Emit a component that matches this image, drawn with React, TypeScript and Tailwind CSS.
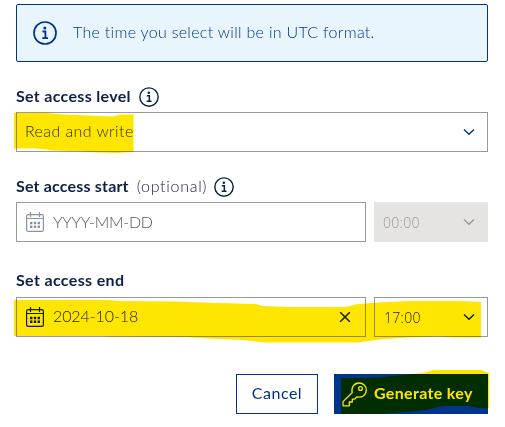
import React from "react";

type IconProps = { className?: string };

function InfoIcon({ className }: IconProps) {
  return (
    <svg viewBox="0 0 24 24" className={className} fill="none" stroke="currentColor">
      <circle cx="12" cy="12" r="11" strokeWidth="1.7" />
      <circle cx="11.8" cy="6.9" r="1.5" fill="currentColor" stroke="none" />
      <path d="M9.4 10.5h3v6.6M9.2 17.1h5.8" strokeWidth="1.8" />
    </svg>
  );
}

function CalendarIcon({ className }: IconProps) {
  return (
    <svg viewBox="0 0 18 20" className={className} fill="none" stroke="currentColor">
      <rect x="0.6" y="2.6" width="16.8" height="16.8" rx="1.6" strokeWidth="1.2" />
      <path d="M1 6.500h16M4.500 0v5M13.500 0v5" strokeWidth="1.2" />
      <path d="M4 11h2.400M7.800 11h2.400M11.600 11h2.400M4 14.700h2.400M7.800 14.700h2.400M11.600 14.700h2.400" strokeWidth="2.400" />
    </svg>
  );
}

function Chevron({ className }: IconProps) {
  return (
    <svg viewBox="0 0 12 8" className={className} fill="none" stroke="currentColor" strokeWidth="1.4">
      <path d="M1 1.5l5 4.7 5-4.7" />
    </svg>
  );
}

function KeyIcon({ className }: IconProps) {
  return (
    <svg viewBox="0 0 25 25" className={className} fill="none" stroke="currentColor" strokeWidth="1.3" strokeLinejoin="round">
      <path d="M10.2 10.8C8.9 5.4 12.2 1 17 1c4.200 0 7.300 3.200 7.300 7 0 4.900-4.300 8.300-9.300 6.800L12.500 17.200H10.300V20H7.300V23.800H1V19.600Z" />
      <circle cx="18.500" cy="6.500" r="1.900" />
    </svg>
  );
}

export default function App() {
  return (
    <div className="relative isolate h-[427px] w-[505px] overflow-hidden bg-white pt-1 pl-4 font-['Lato',sans-serif] text-[16px] text-[#0c2047]">
      <div className="flex w-[472px] flex-col">
        <div className="flex h-[58px] items-center rounded-[2px] border border-[#00338d] bg-[#e8f5fc] pl-4 text-[#00338d]">
          <InfoIcon className="size-6" />
          <span className="ml-4 pb-0.5 font-light tracking-[0.3px] whitespace-nowrap">The time you select will be in UTC format.</span>
        </div>

        <div className="mt-6 flex h-[22px] items-center">
          <span className="pb-0.5 font-bold tracking-[0.31px]">Set access level</span>
          <InfoIcon className="ml-2 size-5" />
        </div>
        <div className="mt-1 flex h-10 items-center justify-between border border-[#999] pr-3 pl-2">
          <span className="pb-0.5 font-light tracking-[0.4px] text-[#333]">Read and write</span>
          <Chevron className="h-2 w-3 text-[#00338d]" />
        </div>

        <div className="mt-6 flex h-[22px] items-center">
          <span className="pb-0.5 font-bold tracking-[0.18px]">Set access start</span>
          <span className="ml-2 pb-0.5 font-light tracking-[0.7px]">(optional)</span>
          <InfoIcon className="ml-[7px] size-5" />
        </div>
        <div className="mt-1 flex gap-2">
          <div className="flex h-10 w-[350px] items-center border border-[#999] pl-[9px]">
            <CalendarIcon className="h-5 w-[18px] text-[#8796a3]" />
            <span className="ml-[9px] font-light tracking-[-0.25px] text-[#555]">YYYY-MM-DD</span>
          </div>
          <div className="flex h-10 w-[114px] items-center justify-between bg-[#e5e4e2] pr-[13px] pl-[9px] text-[#999]">
            <span className="font-['Open_Sans',sans-serif] text-[14px] font-light tracking-[0.3px]">00:00</span>
            <Chevron className="h-2 w-3" />
          </div>
        </div>

        <div className="mt-7 flex h-[22px] items-center">
          <span className="pb-0.5 font-bold tracking-[0.35px]">Set access end</span>
        </div>
        <div className="mt-[5px] flex gap-2">
          <div className="flex h-10 w-[350px] items-center border border-[#999] pr-[14px] pl-[9px]">
            <CalendarIcon className="h-5 w-[18px] text-[#0c2047]" />
            <span className="ml-[9px] pb-0.5 font-light tracking-[-0.1px] text-[#222]">2024-10-18</span>
            <svg viewBox="0 0 12 12" className="ml-auto size-3 text-[#0c2047]" fill="none" stroke="currentColor" strokeWidth="1.500">
              <path d="M1.200 1.200l9.600 9.600M10.800 1.200l-9.600 9.600" />
            </svg>
          </div>
          <div className="flex h-10 w-[114px] items-center justify-between border border-[#999] pr-3 pl-[9px]">
            <span className="font-['Open_Sans',sans-serif] text-[14px] font-light tracking-[0.3px] text-[#222]">17:00</span>
            <Chevron className="h-2 w-3 text-[#0c2047]" />
          </div>
        </div>

        <div className="mt-[37px] flex justify-end gap-4">
          <button className="h-10 w-[82px] border border-[#00338d] pb-0.5 tracking-[0.5px] text-[#00338d]">Cancel</button>
          <button className="flex h-10 w-[154px] items-center bg-[#00338d] pl-2 font-bold text-white">
            <KeyIcon className="size-[25px]" />
            <span className="ml-[7px] pb-0.5 tracking-[0.33px] whitespace-nowrap">Generate key</span>
          </button>
        </div>
      </div>

      <svg viewBox="0 0 505 427" className="pointer-events-none absolute inset-0 h-[427px] w-[505px] mix-blend-multiply" fill="#ffe600">
        <path d="M14 113H46L64 114.500L90 115.500L112 116.500L121 114.500H133.500V151.500L119 153L98 152.500L84 151.500L55 150.500L35 148.500H14Z" />
        <path d="M14 300H108L120 301L176 301.500L215 303L256 304L262 306L290 307H345L358 304L388 302L410 301H460L481 302V337.500H454L440 336.500L405 337.500L380 339.500L358 342.500H265L243 340L210 338.500L185 337L110 336.500L100 336H14Z" />
        <path d="M341 378H365L382 377L412 374L424 373L433 370H481L489 373V408.500L478 408L470 406H443L426 410L400 412.500L382 414H341Z" />
      </svg>
    </div>
  );
}
